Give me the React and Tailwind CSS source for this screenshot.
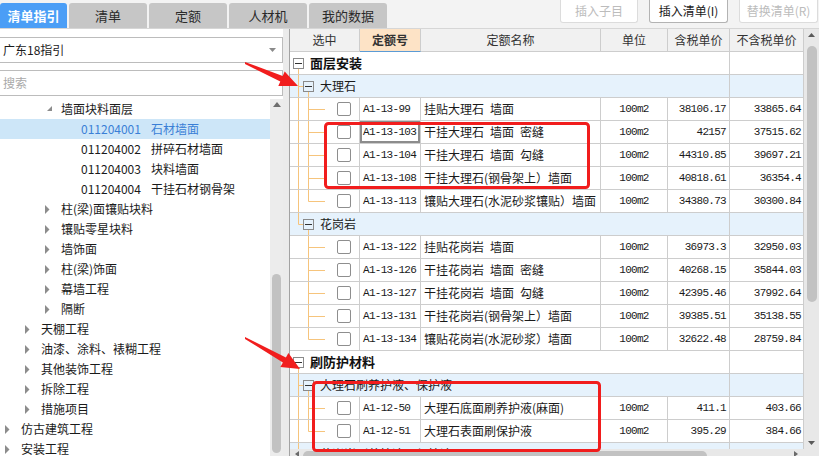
import React from "react";

const cjk = "font-['Noto_Sans_CJK_SC','Noto_Sans',sans-serif]";
const mono = "font-['Liberation_Mono',monospace] text-[11px] tracking-[-0.7px]";
const LINE = "#f6c47c";
const cell = "h-full border-r border-b border-[#cdcdcd] flex items-center shrink-0";
const SP = "\u2002";

const tabs = ["清单", "定额", "人材机", "我的数据"];

const indent = ["pl-[5px]", "pl-[25px]", "pl-[45px]", "pl-[65px]"];

const treeRows = [
  { lvl: 2, t: "墙面块料面层", open: true },
  { lvl: 3, code: "011204001", t: "石材墙面", sel: true },
  { lvl: 3, code: "011204002", t: "拼碎石材墙面" },
  { lvl: 3, code: "011204003", t: "块料墙面" },
  { lvl: 3, code: "011204004", t: "干挂石材钢骨架" },
  { lvl: 2, t: "柱(梁)面镶贴块料" },
  { lvl: 2, t: "镶贴零星块料" },
  { lvl: 2, t: "墙饰面" },
  { lvl: 2, t: "柱(梁)饰面" },
  { lvl: 2, t: "幕墙工程" },
  { lvl: 2, t: "隔断" },
  { lvl: 1, t: "天棚工程" },
  { lvl: 1, t: "油漆、涂料、裱糊工程" },
  { lvl: 1, t: "其他装饰工程" },
  { lvl: 1, t: "拆除工程" },
  { lvl: 1, t: "措施项目" },
  { lvl: 0, t: "仿古建筑工程" },
  { lvl: 0, t: "安装工程" },
];

const rows = [
  { type: "g0", t: "面层安装" },
  { type: "g1", t: "大理石", full: true },
  { type: "it", v0: true, code: "A1-13-99", t: `挂贴大理石${SP}墙面`, p1: "38106.17", p2: "33865.64" },
  { type: "it", v0: true, code: "A1-13-103", t: `干挂大理石${SP}墙面${SP}密缝`, p1: "42157", p2: "37515.62", focus: true },
  { type: "it", v0: true, code: "A1-13-104", t: `干挂大理石${SP}墙面${SP}勾缝`, p1: "44310.85", p2: "39697.21" },
  { type: "it", v0: true, code: "A1-13-108", t: "干挂大理石(钢骨架上）墙面", p1: "40818.61", p2: "36354.4" },
  { type: "it", v0: true, last: true, code: "A1-13-113", t: "镶贴大理石(水泥砂浆镶贴）墙面", p1: "34380.73", p2: "30300.84" },
  { type: "g1", t: "花岗岩", full: false },
  { type: "it", code: "A1-13-122", t: `挂贴花岗岩${SP}墙面`, p1: "36973.3", p2: "32950.03" },
  { type: "it", code: "A1-13-126", t: `干挂花岗岩${SP}墙面${SP}密缝`, p1: "40268.15", p2: "35844.03" },
  { type: "it", code: "A1-13-127", t: `干挂花岗岩${SP}墙面${SP}勾缝`, p1: "42395.46", p2: "37992.64" },
  { type: "it", code: "A1-13-131", t: "干挂花岗岩(钢骨架上）墙面", p1: "39385.51", p2: "35138.55" },
  { type: "it", last: true, code: "A1-13-134", t: "镶贴花岗岩(水泥砂浆）墙面", p1: "32622.48", p2: "28759.84" },
  { type: "g0", t: "刷防护材料" },
  { type: "g1", t: "大理石刷养护液、保护液", full: true },
  { type: "it", v0: true, code: "A1-12-50", t: "大理石底面刷养护液(麻面)", p1: "411.1", p2: "403.66" },
  { type: "it", v0: true, last: true, code: "A1-12-51", t: "大理石表面刷保护液", p1: "395.29", p2: "384.66" },
  { type: "g1", t: "花岗岩刷养护液、保护液", full: false },
];

const Tri = ({ open }) =>
  open ? (
    <svg width="6" height="6" className="ml-[2px]">
      <polygon points="5,0 5,5 0,5" fill="#8c8c8c" />
    </svg>
  ) : (
    <svg width="5" height="9">
      <polygon points="0,0 4.5,4.5 0,9" fill="#8c8c8c" />
    </svg>
  );

const Box = ({ x }) => (
  <>
    <rect x={x - 5} y="6.5" width="10" height="10" fill="none" stroke="#8a8a8a" />
    <line x1={x - 3.5} y1="11.5" x2={x + 3.5} y2="11.5" stroke="#333" />
  </>
);

const ItemLines = ({ v0, last }) => (
  <svg width="47" height="22" className="shrink-0">
    {v0 && <line x1="8.5" y1="0" x2="8.5" y2="22" stroke={LINE} />}
    <line x1="18.5" y1="0" x2="18.5" y2={last ? 11.5 : 22} stroke={LINE} />
    <line x1="18.5" y1="11.5" x2="35" y2="11.5" stroke={LINE} />
  </svg>
);

const G0Lines = () => (
  <svg width="20" height="22" className="shrink-0">
    <Box x={8.5} />
    <line x1="8.5" y1="17" x2="8.5" y2="22" stroke={LINE} />
  </svg>
);

const G1Lines = ({ full }) => (
  <svg width="30" height="22" className="shrink-0">
    <line x1="8.5" y1="0" x2="8.5" y2={full ? 22 : 11.5} stroke={LINE} />
    <line x1="8.5" y1="11.5" x2="13" y2="11.5" stroke={LINE} />
    <Box x={18.5} />
    <line x1="18.5" y1="17" x2="18.5" y2="22" stroke={LINE} />
  </svg>
);

const TableRow = ({ r }) => {
  if (r.type !== "it") {
    const bg = r.type === "g1" ? "bg-[#e6f2fc]" : "bg-white";
    return (
      <div className="flex h-[23px] shrink-0">
        <div className={`${cell} w-[440px] ${bg}`}>
          {r.type === "g0" ? <G0Lines /> : <G1Lines full={r.full} />}
          {r.type === "g0" ? (
            <span className="font-bold text-[13px] text-[#111]">{r.t}</span>
          ) : (
            <span>{r.t}</span>
          )}
        </div>
        <div className={`${cell} w-[74px] ${bg}`} />
      </div>
    );
  }
  return (
    <div className="flex h-[23px] shrink-0 bg-white">
      <div className={`${cell} w-[70px]`}>
        <ItemLines v0={r.v0} last={r.last} />
        <div className="w-[14px] h-[14px] border border-[#8e8e8e] rounded-[2px] bg-white" />
      </div>
      <div
        className={`${cell} w-[61px] pl-[3px] ${mono} ${
          r.focus ? "shadow-[inset_0_0_0_2px_#8c8c8c]" : ""
        }`}
      >
        {r.code}
      </div>
      <div className={`${cell} w-[180px] pl-[3px] whitespace-nowrap overflow-hidden`}>{r.t}</div>
      <div className={`${cell} w-[67px] justify-center ${mono}`}>100m2</div>
      <div className={`${cell} w-[62px] justify-end pr-[3px] ${mono}`}>{r.p1}</div>
      <div className={`${cell} w-[74px] justify-end pr-[2px] ${mono}`}>{r.p2}</div>
    </div>
  );
};

const headers = [
  ["选中", "w-[70px]"],
  ["定额号", "w-[61px]"],
  ["定额名称", "w-[180px]"],
  ["单位", "w-[67px]"],
  ["含税单价", "w-[62px]"],
  ["不含税单价", "w-[74px]"],
];

export default function App() {
  return (
    <div className={`relative w-[819px] h-[456px] overflow-hidden bg-[#f3f3f3] ${cjk} text-[12px] text-[#1a1a1a]`}>
      {/* top bar */}
      <div className="h-[29px] flex border-b border-[#d6d6d6]">
        <div className="flex gap-[2px] pt-[3px] h-full">
          <div className="h-full w-[67px] bg-[#4b9ef6] rounded-t-[3px] flex items-center justify-center text-white font-bold text-[13px]">
            清单指引
          </div>
          {tabs.map((t) => (
            <div
              key={t}
              className="h-full w-[78px] bg-[#c6c6c6] rounded-t-[3px] flex items-center justify-center text-[13px] text-[#2a2a2a]"
            >
              {t}
            </div>
          ))}
        </div>
        <div className="ml-auto flex gap-[11px] pr-[1px]">
          <div className="h-[23px] w-[78px] border border-t-0 border-[#dcdcdc] rounded-b-[3px] bg-white flex items-center justify-center text-[#bcbcbc]">
            插入子目
          </div>
          <div className="h-[23px] w-[79px] border border-t-0 border-[#b3b3b3] rounded-b-[3px] bg-white flex items-center justify-center text-[#1a1a1a]">
            插入清单(I)
          </div>
          <div className="h-[23px] w-[79px] border border-t-0 border-[#dcdcdc] rounded-b-[3px] bg-white flex items-center justify-center text-[#bcbcbc]">
            替换清单(R)
          </div>
        </div>
      </div>

      <div className="flex h-[427px]">
        {/* left panel */}
        <div className="w-[283px] shrink-0 bg-white flex flex-col pt-[8px]">
          <div className="-ml-px w-[284px] h-[26px] border border-[#bcbcbc] flex items-center pl-[3px] pr-[6px]">
            <span>广东18指引</span>
            <svg width="7" height="4" className="ml-auto">
              <polygon points="0,0 7,0 3.5,4" fill="#8a8a8a" />
            </svg>
          </div>
          <div className="-ml-px w-[284px] mt-[7px] h-[26px] border border-[#bcbcbc] flex items-center pl-[3px] text-[#a9a9a9]">
            搜索
          </div>
          <div className="mt-[3px] flex flex-1 min-h-0">
            <div className="flex-1 overflow-hidden">
              {treeRows.map((r, i) => (
                <div
                  key={i}
                  className={`h-[20px] flex items-center whitespace-nowrap ${indent[r.lvl]} ${
                    r.sel ? "bg-[#cde6f8] text-[#3a7fd6]" : ""
                  }`}
                >
                  <div className="w-[16px] flex items-center shrink-0">
                    {r.lvl < 3 && <Tri open={r.open} />}
                  </div>
                  {r.code && <span className="mr-[10px]">{r.code}</span>}
                  <span>{r.t}</span>
                </div>
              ))}
            </div>
            <div className="w-[13px] bg-[#ececec] flex flex-col items-center pt-[3px]">
              <svg width="8" height="5">
                <polygon points="0,5 8,5 4,0" fill="#6e6e6e" />
              </svg>
              <div className="mt-[167px] w-[9px] h-[179px] rounded-full bg-[#c2c2c2]" />
            </div>
          </div>
        </div>

        <div className="w-[6px] shrink-0 bg-[#ebebeb]" />

        {/* right panel */}
        <div className="flex-1 flex flex-col border-l border-[#a3a3a3] bg-white min-w-0">
          <div className="flex flex-1 min-h-0">
            <div className="w-[514px] flex flex-col overflow-hidden">
              <div className="flex h-[23px] shrink-0 bg-[#f1f1f1]">
                {headers.map(([h, w]) => (
                  <div
                    key={h}
                    className={`${cell} ${w} justify-center text-[#333] ${
                      h === "定额号" ? "bg-[#fde3c6] font-bold text-[#111] border-b-[#5b9bd5]" : ""
                    }`}
                  >
                    {h}
                  </div>
                ))}
              </div>
              {rows.map((r, i) => (
                <TableRow key={i} r={r} />
              ))}
            </div>
            <div className="w-[15px] bg-[#e8e8e8] flex flex-col items-center pt-[4px] pb-[4px]">
              <svg width="7" height="4">
                <polygon points="0,4 7,4 3.5,0" fill="#5a5a5a" />
              </svg>
              <div className="mt-[9px] w-[10px] h-[256px] rounded-full bg-[#c2c2c2]" />
              <svg width="7" height="4" className="mt-auto">
                <polygon points="0,0 7,0 3.5,4" fill="#5a5a5a" />
              </svg>
            </div>
          </div>
          <div className="h-[7px] flex bg-[#e8e8e8] overflow-hidden shrink-0">
            <div className="w-[514px] flex items-start pt-[2px] pl-[5px]">
              <svg width="4" height="6">
                <polygon points="4,0 4,6 0,3" fill="#6a6a6a" />
              </svg>
              <div className="ml-[4px] w-[404px] h-[10px] rounded-full bg-[#c2c2c2]" />
              <svg width="4" height="6" className="ml-auto mr-[6px]">
                <polygon points="0,0 0,6 4,3" fill="#6a6a6a" />
              </svg>
            </div>
          </div>
        </div>
      </div>

      {/* annotations */}
      <svg width="819" height="456" className="absolute inset-0 pointer-events-none">
        <rect x="325.5" y="123.5" width="263" height="64" rx="3" fill="none" stroke="#f11d1d" strokeWidth="3" />
        <rect x="313.5" y="382.5" width="286" height="68" rx="3" fill="none" stroke="#f11d1d" strokeWidth="3" />
        <polygon
          points="245,62 282.7,76 284.7,71.5 298,86 278.3,86.1 280.3,81.6 245,64"
          fill="#f11d1d"
        />
        <polygon
          points="245,337 285.9,357.4 288.4,353.1 300,369 280.4,366.9 282.9,362.6 245,339"
          fill="#f11d1d"
        />
      </svg>
    </div>
  );
}
